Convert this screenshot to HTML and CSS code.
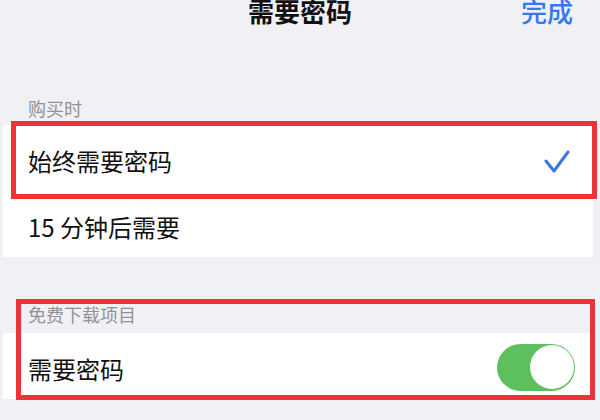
FILE: index.html
```html
<!DOCTYPE html>
<html>
  <head>
    <meta charset="utf-8">
    <title>需要密码</title>
    <link rel="stylesheet" href="styles.css">
  </head>
  <body>
    <div class="nav">
      <span></span>
      <h1 class="title">需要密码</h1>
      <a href="javascript:;" class="done">完成</a>
    </div>
    <div class="page">
      <p class="head first">购买时</p>
      <ul class="group">
        <li class="row mark">
          <span>始终需要密码</span>
          <svg class="check" width="26" height="25" viewBox="0 0 26 25">
            <polyline points="2,12 10,22 24,3" fill="none" stroke="#3a76e4" stroke-width="3" stroke-linecap="round" stroke-linejoin="round"/>
          </svg>
        </li>
        <li class="row">
          <span>15 分钟后需要</span>
        </li>
      </ul>
      <div class="free">
        <p class="head">免费下载项目</p>
        <ul class="group">
          <li class="row">
            <span>需要密码</span>
            <span class="switch on"><i></i></span>
          </li>
        </ul>
      </div>
    </div>
  </body>
</html>
```
FILE: styles.css
```css
*{ margin:0; padding:0; list-style: none; box-sizing: border-box; }
a{ text-decoration: none; }
body{ background: #f0f0f5; color: #111;
  font-family: "Noto Sans CJK SC", "Noto Sans", sans-serif; height: 420px; overflow: hidden; }

/* 顶部导航 */
.nav{ display: grid; grid-template-columns: 1fr auto 1fr; align-items: center;
  height: 26px; line-height: 26px; margin-top: -2px; }
.title{ font-size: 26px; font-weight: 700; }
.done{ justify-self: end; padding-right: 27px; font-size: 26px; font-weight: 500; color: #3478f6; }

/* 列表 */
.page{ padding: 0 7px 0 3px; }
.head{ font-size: 18px; line-height: 18px; color: #929297; padding: 48px 0 10px 25px; }
.head.first{ padding: 75px 0 8px 25px; }
.group{ background: #fff; }
.row{ display: flex; align-items: center; justify-content: space-between;
  height: 66px; padding: 6px 18px 0 25px; font-size: 24px; line-height: 24px; position: relative; }
.check{ margin-right: 5px; }

/* 红框标注 */
.mark::after{ content: ''; position: absolute; top: -4px; left: 8px; right: -4px; bottom: -8px;
  border: 5px solid #ec3438; }
.free{ position: relative; }
.free::after{ content: ''; position: absolute; top: 42px; left: 13px; right: -2px; bottom: -1px;
  border: 5px solid #ec3438; }

/* 开关 */
.switch{ display: flex; width: 78px; height: 47px; border-radius: 24px; padding: 1.5px;
  background: #e5e5ea; margin-top: -4px; }
.switch i{ display: block; width: 44px; height: 44px; border-radius: 50%; background: #fff; }
.switch.on{ background: #5cc05e; justify-content: flex-end; }
```
